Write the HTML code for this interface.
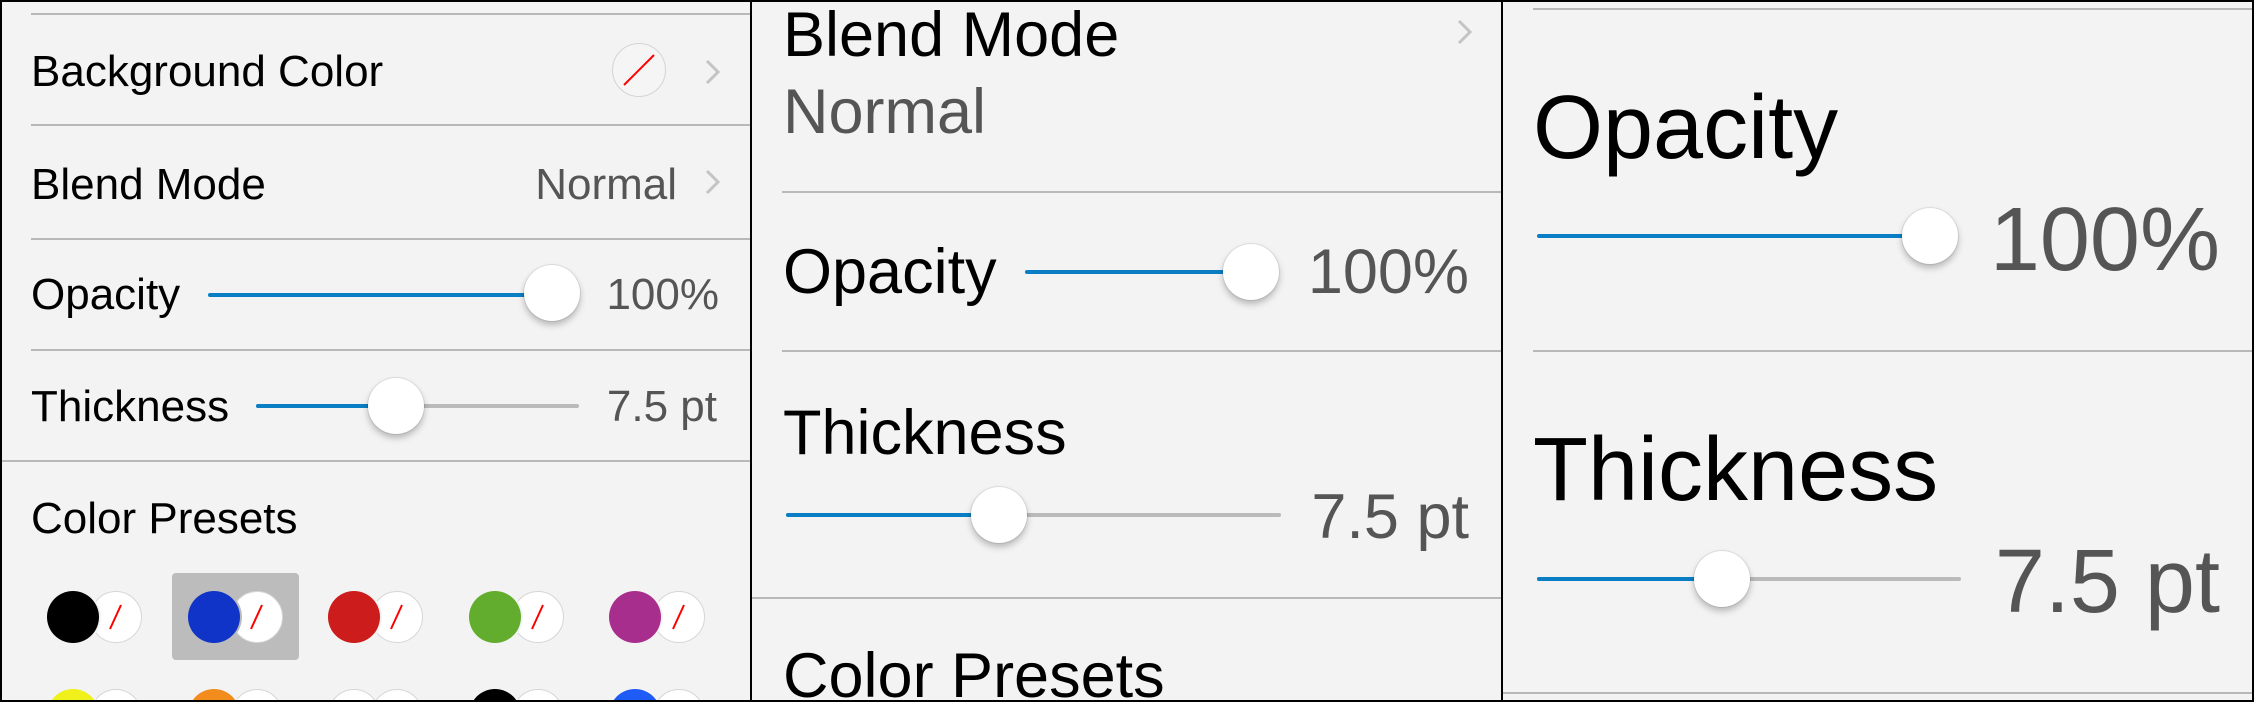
<!DOCTYPE html>
<html><head><meta charset="utf-8"><style>
*{margin:0;padding:0;box-sizing:border-box}
html,body{width:2254px;height:702px;overflow:hidden;background:#f3f3f3}
body{font-family:"Liberation Sans",sans-serif}
#root{position:relative;width:2254px;height:702px;overflow:hidden}
.t{position:absolute;line-height:1;white-space:nowrap;color:#000}
.v{color:#555}
.sep{position:absolute;height:2px;background:#b8b8b8}
.trk{position:absolute;height:4px;border-radius:2px}
.b{background:#0a7ec4}.g{background:#bababa}
.knob{position:absolute;border-radius:50%;background:#fff;box-shadow:0 4px 7px rgba(0,0,0,.25),0 0 0 1px rgba(0,0,0,.07)}
.vl{position:absolute;top:0;width:2px;height:702px;background:#000}
.c{position:absolute;width:52px;height:52px;border-radius:50%}
.w{background:#fff;border:1px solid #d6d6d6}
.col{box-shadow:0 0 0 2px #f3f3f3}
</style></head><body><div id="root">
<!-- panel 1 -->
<div class="sep" style="left:31px;top:13px;width:720px"></div>
<div class="t" style="left:31px;top:50px;font-size:44px">Background Color</div>
<div style="position:absolute;left:612px;top:43px;width:54px;height:54px;border-radius:50%;background:#f5f5f5;border:1px solid #d4d4d4"></div>
<svg style="position:absolute;left:612px;top:43px" width="54" height="54"><line x1="12" y1="42" x2="42" y2="12" stroke="#f00" stroke-width="2"/></svg>
<svg style="position:absolute;left:704px;top:58px" width="18" height="28"><polyline points="3,3 14,14 3,25" fill="none" stroke="#c4c4c6" stroke-width="3"/></svg>
<div class="sep" style="left:31px;top:124px;width:720px"></div>
<div class="t" style="left:31px;top:163px;font-size:44px">Blend Mode</div>
<div class="t v" style="right:1577px;top:163px;font-size:44px">Normal</div>
<svg style="position:absolute;left:704px;top:168px" width="18" height="28"><polyline points="3,3 14,14 3,25" fill="none" stroke="#c4c4c6" stroke-width="3"/></svg>
<div class="sep" style="left:31px;top:238px;width:720px"></div>
<div class="t" style="left:31px;top:273px;font-size:44px">Opacity</div>
<div class="trk b" style="left:208px;top:293px;width:344px"></div>
<div class="knob" style="left:524px;top:265px;width:56px;height:56px"></div>
<div class="t v" style="right:1535px;top:273px;font-size:44px">100%</div>
<div class="sep" style="left:31px;top:349px;width:720px"></div>
<div class="t" style="left:31px;top:385px;font-size:44px">Thickness</div>
<div class="trk g" style="left:256px;top:404px;width:323px"></div>
<div class="trk b" style="left:256px;top:404px;width:140px"></div>
<div class="knob" style="left:368px;top:378px;width:56px;height:56px"></div>
<div class="t v" style="right:1537px;top:385px;font-size:44px">7.5 pt</div>
<div class="sep" style="left:0;top:460px;width:751px"></div>
<div class="t" style="left:31px;top:497px;font-size:44px">Color Presets</div>
<div style="position:absolute;left:172px;top:573px;width:127px;height:87px;background:#bcbcbc;border-radius:4px"></div>
<!-- presets row 1 -->
<div class="c w" style="left:90px;top:591px"></div><svg style="position:absolute;left:90px;top:591px" width="52" height="52"><line x1="20" y1="38" x2="31" y2="14" stroke="#f00" stroke-width="2"/></svg><div class="c col" style="left:47px;top:591px;background:#000"></div>
<div class="c w" style="left:231px;top:591px"></div><svg style="position:absolute;left:231px;top:591px" width="52" height="52"><line x1="20" y1="38" x2="31" y2="14" stroke="#f00" stroke-width="2"/></svg><div class="c" style="left:188px;top:591px;background:#1034c8;box-shadow:0 0 0 2px #bcbcbc"></div>
<div class="c w" style="left:371px;top:591px"></div><svg style="position:absolute;left:371px;top:591px" width="52" height="52"><line x1="20" y1="38" x2="31" y2="14" stroke="#f00" stroke-width="2"/></svg><div class="c col" style="left:328px;top:591px;background:#cc1c1c"></div>
<div class="c w" style="left:512px;top:591px"></div><svg style="position:absolute;left:512px;top:591px" width="52" height="52"><line x1="20" y1="38" x2="31" y2="14" stroke="#f00" stroke-width="2"/></svg><div class="c col" style="left:469px;top:591px;background:#63ad2e"></div>
<div class="c w" style="left:653px;top:591px"></div><svg style="position:absolute;left:653px;top:591px" width="52" height="52"><line x1="20" y1="38" x2="31" y2="14" stroke="#f00" stroke-width="2"/></svg><div class="c col" style="left:609px;top:591px;background:#a82e8e"></div>
<!-- presets row 2 -->
<div class="c w" style="left:90px;top:689px"></div><div class="c col" style="left:47px;top:689px;background:#f0f01a"></div>
<div class="c w" style="left:231px;top:689px"></div><div class="c col" style="left:188px;top:689px;background:#f28c1c"></div>
<div class="c w" style="left:371px;top:689px"></div><div class="c w" style="left:328px;top:689px"></div>
<div class="c w" style="left:512px;top:689px"></div><div class="c col" style="left:469px;top:689px;background:#000"></div>
<div class="c w" style="left:653px;top:689px"></div><div class="c col" style="left:609px;top:689px;background:#1f5bf5"></div>

<!-- panel 2 -->
<div class="t" style="left:783px;top:4px;font-size:63px">Blend Mode</div>
<svg style="position:absolute;left:1456px;top:18px" width="18" height="28"><polyline points="3,3 14,14 3,25" fill="none" stroke="#c4c4c6" stroke-width="3"/></svg>
<div class="t v" style="left:783px;top:81px;font-size:63px">Normal</div>
<div class="sep" style="left:782px;top:191px;width:720px"></div>
<div class="t" style="left:783px;top:241px;font-size:63px">Opacity</div>
<div class="trk b" style="left:1025px;top:270px;width:226px"></div>
<div class="knob" style="left:1223px;top:244px;width:56px;height:56px"></div>
<div class="t v" style="right:785px;top:241px;font-size:63px">100%</div>
<div class="sep" style="left:782px;top:350px;width:720px"></div>
<div class="t" style="left:783px;top:402px;font-size:63px">Thickness</div>
<div class="trk g" style="left:786px;top:513px;width:495px"></div>
<div class="trk b" style="left:786px;top:513px;width:213px"></div>
<div class="knob" style="left:971px;top:487px;width:56px;height:56px"></div>
<div class="t v" style="right:785px;top:486px;font-size:63px">7.5 pt</div>
<div class="sep" style="left:751px;top:597px;width:751px"></div>
<div class="t" style="left:783px;top:645px;font-size:63px">Color Presets</div>

<!-- panel 3 -->
<div class="sep" style="left:1533px;top:8px;width:721px"></div>
<div class="t" style="left:1533px;top:83px;font-size:90px">Opacity</div>
<div class="trk b" style="left:1537px;top:234px;width:393px"></div>
<div class="knob" style="left:1902px;top:208px;width:56px;height:56px"></div>
<div class="t v" style="right:34px;top:195px;font-size:90px">100%</div>
<div class="sep" style="left:1533px;top:350px;width:721px"></div>
<div class="t" style="left:1533px;top:425px;font-size:90px">Thickness</div>
<div class="trk g" style="left:1537px;top:577px;width:424px"></div>
<div class="trk b" style="left:1537px;top:577px;width:185px"></div>
<div class="knob" style="left:1694px;top:551px;width:56px;height:56px"></div>
<div class="t v" style="right:34px;top:537px;font-size:90px">7.5 pt</div>
<div class="sep" style="left:1502px;top:692px;width:752px"></div>

<!-- borders -->
<div class="vl" style="left:750px"></div>
<div class="vl" style="left:1501px"></div>
<div style="position:absolute;left:0;top:0;width:2254px;height:702px;border:2px solid #000"></div>
</div></body></html>
